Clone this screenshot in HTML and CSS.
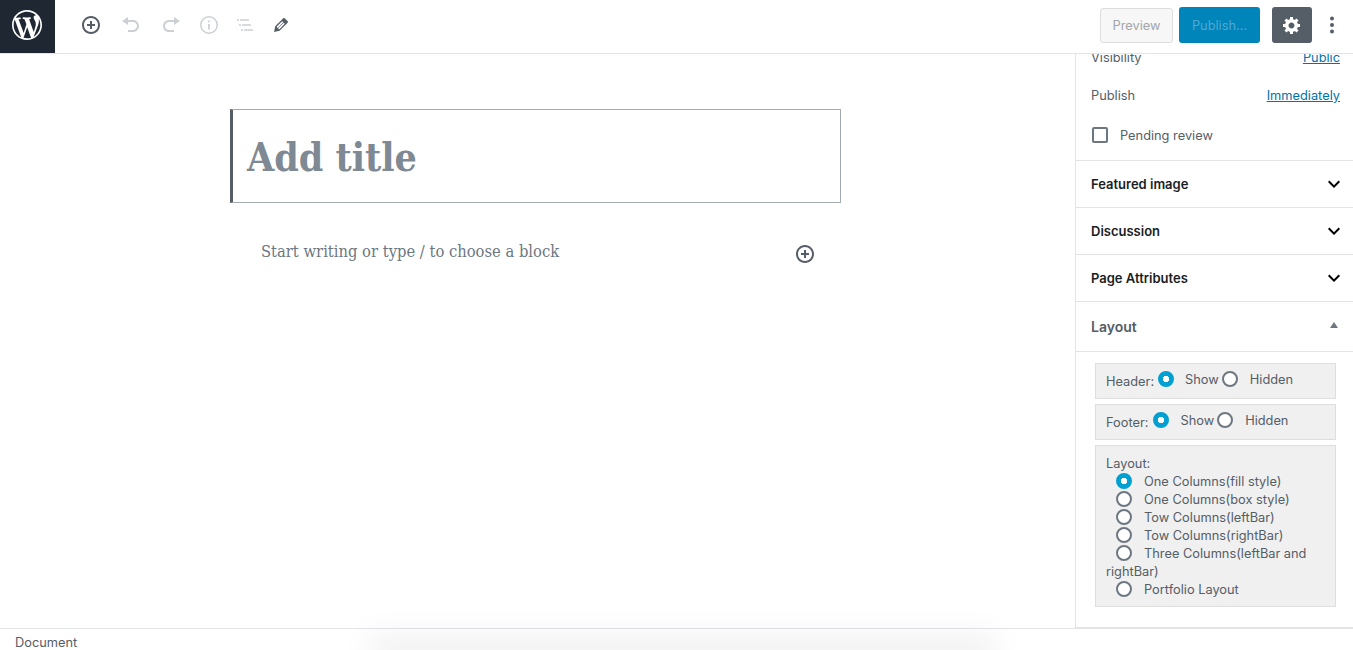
FILE: index.html
```html
<!DOCTYPE html>
<html lang="en">
<head>
  <meta charset="UTF-8">
  <meta name="viewport" content="width=device-width, initial-scale=1.0">
  <title>Edit Page</title>
  <link rel="stylesheet" href="styles.css">
</head>
<body>
  <div class="editor">
    <header class="topbar">
      <a class="wp-logo" href="#">
        <svg viewBox="0 0 20 20" width="30" height="30"><path d="M20 10c0-5.51-4.49-10-10-10C4.48 0 0 4.49 0 10c0 5.52 4.48 10 10 10 5.51 0 10-4.48 10-10zM7.78 15.37L4.37 6.22c.55-.02 1.17-.08 1.17-.08.5-.06.44-1.13-.06-1.11 0 0-1.45.11-2.37.11-.18 0-.37 0-.58-.01C4.12 2.69 6.87 1.11 10 1.11c2.33 0 4.45.87 6.05 2.34-.68-.11-1.65.39-1.65 1.58 0 .74.45 1.36.9 2.1.35.61.55 1.36.55 2.46 0 1.49-1.4 5-1.4 5l-3.03-8.37c.54-.02.82-.17.82-.17.5-.05.44-1.25-.06-1.22 0 0-1.44.12-2.38.12-.87 0-2.33-.12-2.33-.12-.5-.03-.56 1.2-.06 1.22l.92.08 1.26 3.41zM17.41 10c.24-.64.74-1.87.43-4.25.7 1.29 1.05 2.71 1.05 4.25 0 3.29-1.73 6.24-4.4 7.78.97-2.59 1.94-5.2 2.92-7.78zM6.1 18.09C3.12 16.65 1.11 13.53 1.11 10c0-1.3.23-2.48.72-3.59C3.25 10.3 4.67 14.2 6.1 18.09zm4.03-6.63l2.58 6.98c-.86.29-1.76.45-2.71.45-.79 0-1.57-.11-2.29-.33.81-2.38 1.62-4.74 2.42-7.1z"/></svg>
      </a>
      <div class="tools">
        <button class="tool">
          <svg viewBox="0 0 20 20" width="20" height="20"><path d="M10 1c-5 0-9 4-9 9s4 9 9 9 9-4 9-9-4-9-9-9zm0 16c-3.9 0-7-3.1-7-7s3.1-7 7-7 7 3.1 7 7-3.1 7-7 7zm1-11H9v3H6v2h3v3h2v-3h3V9h-3V6z"/></svg>
        </button>
        <button class="tool off">
          <svg viewBox="0 0 20 20" width="20" height="20"><path d="M12 5H7V2L1 6l6 4V7h5c2.2 0 4 1.8 4 4s-1.8 4-4 4H7v2h5c3.3 0 6-2.7 6-6s-2.7-6-6-6z"/></svg>
        </button>
        <button class="tool off">
          <svg viewBox="0 0 20 20" width="20" height="20"><path d="M8 5h5V2l6 4-6 4V7H8c-2.2 0-4 1.8-4 4s1.8 4 4 4h5v2H8c-3.3 0-6-2.7-6-6s2.7-6 6-6z"/></svg>
        </button>
        <button class="tool off tool-info">
          <svg viewBox="0 0 20 20" width="20" height="20"><path d="M10 1a9 9 0 1 0 0 18 9 9 0 0 0 0-18zm0 1.500a7.500 7.500 0 1 1 0 15 7.500 7.500 0 0 1 0-15zM9.100 5.500h1.800v1.800H9.100zM9.100 9h1.800v5.500H9.100z"/></svg>
        </button>
        <button class="tool off tool-tight">
          <svg viewBox="0 0 20 20" width="20" height="20"><path d="M2 4.300h2v1.400H2zM5 4.300h9v1.400H5zM4 9.300h2v1.400H4zM7 9.300h9v1.400H7zM6 14.300h2v1.400H6zM9 14.300h9v1.400H9z"/></svg>
        </button>
        <button class="tool tool-tight">
          <svg viewBox="0 0 20 20" width="20" height="20"><path d="M13.89 3.39l2.71 2.72c.46.46.42 1.24.03 1.64l-8.01 8.02-5.56 1.16 1.16-5.58s7.6-7.63 7.99-8.03c.39-.39 1.22-.39 1.68.07zm-2.73 2.79l-5.59 5.61 1.11 1.11 5.54-5.65zm-2.97 8.23l5.58-5.6-1.07-1.08-5.59 5.6z"/></svg>
        </button>
      </div>
      <div class="actions">
        <button class="btn-preview">Preview</button>
        <button class="btn-publish">Publish...</button>
        <button class="btn-settings">
          <svg viewBox="0 0 20 20" width="20" height="20"><path d="M18 12h-2.18c-.17.7-.44 1.350-.81 1.930l1.540 1.540-2.100 2.100-1.540-1.540c-.58.36-1.230.63-1.910.79V19H8v-2.180c-.68-.16-1.330-.43-1.910-.79l-1.540 1.540-2.120-2.120 1.540-1.540c-.36-.58-.63-1.230-.79-1.910H1V9.030h2.170c.16-.7.44-1.350.8-1.940L2.430 5.550l2.100-2.100 1.540 1.540c.58-.37 1.240-.64 1.930-.81V2h3v2.180c.68.16 1.330.43 1.910.79l1.540-1.540 2.120 2.120-1.540 1.540c.36.59.64 1.240.8 1.940H18V12zm-8.500 1.500c1.660 0 3-1.340 3-3s-1.340-3-3-3-3 1.340-3 3 1.340 3 3 3z"/></svg>
        </button>
        <button class="btn-more">
          <svg viewBox="0 0 4 20" width="4" height="20"><circle cx="2" cy="3.500" r="2"/><circle cx="2" cy="10" r="2"/><circle cx="2" cy="16.500" r="2"/></svg>
        </button>
      </div>
    </header>

    <div class="workspace">
      <main class="content">
        <div class="title-box">Add title</div>
        <div class="block-row">
          <p class="placeholder">Start writing or type / to choose a block</p>
          <svg class="inline-add" viewBox="0 0 20 20" width="20" height="20"><path d="M10 1c-5 0-9 4-9 9s4 9 9 9 9-4 9-9-4-9-9-9zm0 16c-3.900 0-7-3.100-7-7s3.100-7 7-7 7 3.100 7 7-3.100 7-7 7zm1-11H9v3H6v2h3v3h2v-3h3V9h-3V6z"/></svg>
        </div>
      </main>

      <aside class="sidebar">
        <div class="sidebar-inner">
          <section class="status-panel">
            <div class="status-row"><span>Visibility</span><a href="#">Public</a></div>
            <div class="status-row"><span>Publish</span><a href="#">Immediately</a></div>
            <label class="pending"><span class="checkbox"></span>Pending review</label>
          </section>

          <section class="panel-head">
            <h2>Featured image</h2>
            <svg viewBox="0 0 24 24" width="24" height="24"><path d="M7.410 8.590L12 13.170l4.590-4.580L18 10l-6 6-6-6 1.410-1.410z"/></svg>
          </section>
          <section class="panel-head">
            <h2>Discussion</h2>
            <svg viewBox="0 0 24 24" width="24" height="24"><path d="M7.410 8.590L12 13.170l4.590-4.580L18 10l-6 6-6-6 1.410-1.410z"/></svg>
          </section>
          <section class="panel-head">
            <h2>Page Attributes</h2>
            <svg viewBox="0 0 24 24" width="24" height="24"><path d="M7.410 8.590L12 13.170l4.590-4.580L18 10l-6 6-6-6 1.410-1.410z"/></svg>
          </section>

          <section class="layout-head">
            <h2>Layout</h2>
            <span class="caret-up"></span>
          </section>

          <section class="meta-box">
            <div class="meta-row">
              <span class="meta-label">Header:</span>
              <input type="radio" name="header" checked>
              <span class="show-label">Show</span>
              <input type="radio" name="header">
              <span>Hidden</span>
            </div>
            <div class="meta-row">
              <span class="meta-label">Footer:</span>
              <input type="radio" name="footer" checked>
              <span class="show-label">Show</span>
              <input type="radio" name="footer">
              <span>Hidden</span>
            </div>
            <div class="meta-layout">
              Layout:<br>
              <input type="radio" name="layout" checked>One Columns(fill style)<br>
              <input type="radio" name="layout">One Columns(box style)<br>
              <input type="radio" name="layout">Tow Columns(leftBar)<br>
              <input type="radio" name="layout">Tow Columns(rightBar)<br>
              <input type="radio" name="layout">Three Columns(leftBar and rightBar)<br>
              <input type="radio" name="layout">Portfolio Layout
            </div>
          </section>
        </div>
      </aside>
    </div>

    <footer class="statusbar">Document</footer>
    <div class="bottom-shadow"></div>
  </div>
</body>
</html>
```

FILE: styles.css
```css
* {
  box-sizing: border-box;
}

html,
body {
  height: 100%;
  margin: 0;
}

body {
  font-family: Inter, "Noto Sans", sans-serif;
  font-size: 12.8px;
  color: #555d66;
  background: white;
  overflow: hidden;
}

h2 {
  margin: 0;
  font-size: 13px;
  font-weight: 600;
}

button {
  border: none;
  background: none;
  padding: 0;
  font: inherit;
}

.editor {
  position: relative;
  display: flex;
  flex-direction: column;
  height: 650px;
  overflow: hidden;
}

/* top bar */
.topbar {
  display: flex;
  align-items: center;
  height: 54px;
  flex: none;
  border-bottom: 1px solid #e2e4e7;
}

.wp-logo {
  display: flex;
  align-items: center;
  justify-content: center;
  width: 55px;
  height: 53px;
  padding: 0 1px 3px 0;
  background: #1e2732;
  fill: white;
}

.tools {
  display: flex;
  align-items: center;
  gap: 4px;
  margin-left: 18px;
  padding-bottom: 3px;
}

.tool {
  display: flex;
  align-items: center;
  justify-content: center;
  width: 36px;
  height: 36px;
  fill: #555d66;
}

.tool.off {
  fill: #ccd0d4;
}

.tool-info {
  margin-left: -2px;
}

.tool-tight {
  margin-left: -4px;
}

.actions {
  display: flex;
  align-items: center;
  margin-left: auto;
  padding: 0 19px 3px 0;
}

.btn-preview {
  width: 73px;
  height: 35px;
  color: #a0a5aa;
  background: #f7f7f7;
  border: 1px solid #dddddd;
  border-radius: 3px;
}

.btn-publish {
  width: 81px;
  height: 36px;
  margin-left: 6px;
  color: #4fa8d4;
  background: #0085ba;
  border-radius: 3px;
}

.btn-settings {
  display: flex;
  align-items: center;
  justify-content: center;
  width: 40px;
  height: 36px;
  margin-left: 12px;
  background: #555d66;
  border-radius: 3px;
  fill: white;
}

.btn-more {
  display: flex;
  width: 4px;
  margin-left: 18px;
  fill: #555d66;
}

/* editing area */
.workspace {
  display: flex;
  flex: 1;
  min-height: 0;
}

.content {
  flex: 1;
  padding-top: 55px;
  padding-left: 230px;
}

.title-box {
  width: 611px;
  height: 94px;
  padding: 22px 14px 20px;
  font-family: "DejaVu Serif Condensed", "DejaVu Serif", serif;
  font-size: 39px;
  font-weight: bold;
  line-height: 50px;
  color: #7e8993;
  border: 1px solid #a2aab2;
  border-left: 3px solid #555d66;
}

.block-row {
  display: flex;
  align-items: center;
  width: 611px;
  margin-top: 34px;
  padding-left: 31px;
}

.placeholder {
  flex: 1;
  margin: 0;
  font-family: "DejaVu Serif Condensed", "DejaVu Serif", serif;
  font-size: 16.400px;
  line-height: 30px;
  color: #6c7781;
}

.inline-add {
  margin: 4px 26px 0 0;
  fill: #555d66;
}

/* sidebar */
.sidebar {
  flex: none;
  width: 278px;
  border-left: 1px solid #e2e4e7;
  overflow: hidden;
}

.sidebar-inner {
  margin-top: -11px;
  border-bottom: 2px solid #e2e4e7;
}

.status-panel {
  height: 118px;
  padding: 5px 13px 0 15px;
  border-bottom: 1px solid #e2e4e7;
}

.status-row {
  display: flex;
  justify-content: space-between;
  height: 38px;
  line-height: 20px;
}

.status-row a {
  color: #0073aa;
}

.pending {
  display: flex;
  align-items: center;
  gap: 12px;
  margin: 3px 0 0 1px;
}

.checkbox {
  width: 16px;
  height: 16px;
  border: 2px solid #6c7781;
  border-radius: 2px;
}

.panel-head,
.layout-head {
  display: flex;
  align-items: center;
  justify-content: space-between;
  padding: 0 7px 0 15px;
  border-bottom: 1px solid #e2e4e7;
}

.panel-head {
  height: 47px;
  color: #191e23;
}

.layout-head {
  height: 50px;
  padding-right: 15px;
}

.layout-head h2 {
  font-size: 14px;
}

.caret-up {
  width: 0;
  height: 0;
  margin-bottom: 4px;
  border-left: 4px solid transparent;
  border-right: 4px solid transparent;
  border-bottom: 6px solid #6c7781;
}

.meta-box {
  padding: 11px 17px 20px 19px;
}

.meta-row,
.meta-layout {
  background: #f0f0f0;
  border: 1px solid #dedede;
  padding: 9px 10px 7px;
  line-height: 18px;
}

.meta-row {
  display: flex;
  align-items: center;
  height: 36px;
  padding-top: 4px;
  padding-bottom: 8px;
  margin-bottom: 5px;
}

.meta-row span {
  padding-top: 2px;
}

.meta-row .meta-label {
  padding-top: 6px;
  margin-right: 4px;
}

.meta-row + .meta-row .meta-label {
  margin-right: 5px;
}

.show-label {
  margin-right: 3px;
}

input[type="radio"] {
  appearance: none;
  flex: none;
  width: 16px;
  height: 16px;
  margin: 0 11px 0 0;
  background: white;
  border: 2px solid #6c7781;
  border-radius: 50%;
}

.show-label + input[type="radio"] {
  margin-right: 12px;
}

input[type="radio"]:checked {
  background: radial-gradient(circle, white 0 3px, #00a0d2 3.500px);
  border-color: #00a0d2;
}

.meta-layout input[type="radio"] {
  margin: -4px 12px 0 10px;
  vertical-align: middle;
}

/* status bar */
.statusbar {
  flex: none;
  height: 22px;
  padding: 5px 15px 0;
  line-height: 18px;
  color: #555d66;
  border-top: 1px solid #e2e4e7;
}

.bottom-shadow {
  position: absolute;
  left: 369px;
  top: 700px;
  width: 628px;
  height: 40px;
  box-shadow: 0 -68px 30px rgba(0, 0, 0, 0.05);
}
```
